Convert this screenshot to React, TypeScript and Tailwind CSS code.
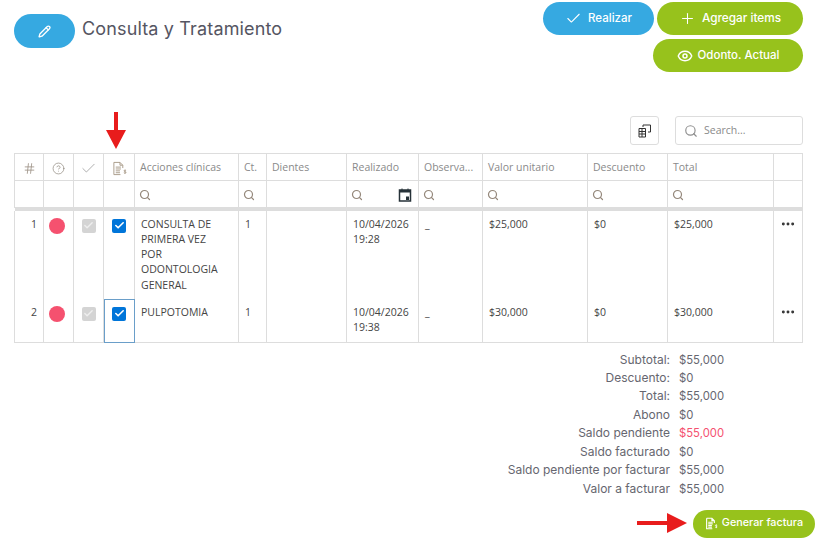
import { Check, Plus, Eye, Search, Pencil, Hash, CircleHelp, Ellipsis } from 'lucide-react'

const widths = [29, 30, 30, 31, 104, 28, 80, 72, 64, 105, 80, 106, 29]

const rows = [
  { n: 1, accion: 'CONSULTA DE PRIMERA VEZ POR ODONTOLOGIA GENERAL', fecha: '10/04/2026', hora: '19:28', valor: '$25,000', total: '$25,000', h: 'h-[88px]' },
  { n: 2, accion: 'PULPOTOMIA', fecha: '10/04/2026', hora: '19:38', valor: '$30,000', total: '$30,000', h: 'h-[44px]' },
]

const resumen = [
  ['Subtotal:', '$55,000'],
  ['Descuento:', '$0'],
  ['Total:', '$55,000'],
  ['Abono', '$0'],
  ['Saldo pendiente', '$55,000'],
  ['Saldo facturado', '$0'],
  ['Saldo pendiente por facturar', '$55,000'],
  ['Valor a facturar', '$55,000'],
]

function InvoiceIcon({ className, strokeWidth = 1 }: { className?: string; strokeWidth?: number }) {
  return (
    <svg viewBox="0 0 16 16" fill="none" stroke="currentColor" strokeWidth={strokeWidth} className={className}>
      <path d="M2 1.5h6.5l3 3v3M2 1.5v13h7M8.5 1.5v3h3M4 6.5h5.5M4 8.5h5.5M4 10.5h4.5M4 12.5h4.5" />
      <path d="M15 10.2c-.5-.6-2-.6-2.2.2-.2 1 2.2.8 2.1 1.9-.1.9-1.7.9-2.3.2M13.9 9.3v4.4" strokeWidth="0.9" />
    </svg>
  )
}

function GrayBox() {
  return (
    <span className="flex h-[14px] w-[14px] items-center justify-center rounded-[2px] bg-[#d4d4d4]">
      <Check size={11} strokeWidth={3} className="text-[#eeeeee]" />
    </span>
  )
}

function BlueBox() {
  return (
    <span className="flex h-[14px] w-[14px] items-center justify-center rounded-[2px] bg-[#0075d9]">
      <Check size={11} strokeWidth={3.5} className="text-white" />
    </span>
  )
}

function FilterIcon() {
  return <Search size={12} strokeWidth={2.4} className="ml-[-1px] text-[#94877a]" />
}

export default function App() {
  const th = 'border border-[#dddddd] px-[5px] pt-[2px] text-left align-middle font-normal text-[#8a8a8a]'
  const td = 'border-x border-[#dddddd] px-[6px] pt-[6px] align-top text-[#444444]'

  return (
    <div className="relative h-[542px] w-[819px] overflow-hidden bg-white font-['Inter',sans-serif]">
      <div className="flex items-start justify-between pl-[14px] pr-[16px] pt-[2px]">
        <div className="flex items-center gap-[7px] pt-[12px]">
          <button className="flex h-[34px] w-[61px] items-center justify-center rounded-full bg-[#36a9e1] text-white">
            <Pencil size={13} strokeWidth={2.4} />
          </button>
          <h1 className="mt-[-6px] text-[18px] font-normal tracking-[0.15px] text-[#555562]">Consulta y Tratamiento</h1>
        </div>
        <div className="flex w-[260px] flex-col items-end gap-[4px]">
          <div className="flex gap-[3px]">
            <button className="flex h-[33px] w-[111px] items-center justify-center gap-[6px] rounded-full bg-[#36a9e1] text-[11.5px] font-medium text-white">
              <Check size={17} strokeWidth={1.5} />
              Realizar
            </button>
            <button className="flex h-[33px] w-[146px] items-center justify-center gap-[6px] rounded-full bg-[#97c21c] text-[11.8px] font-medium text-white">
              <Plus size={17} strokeWidth={1.5} />
              Agregar items
            </button>
          </div>
          <button className="flex h-[33px] w-[150px] items-center justify-center gap-[5px] rounded-full bg-[#97c21c] text-[11.5px] font-medium text-white">
            <Eye size={16} strokeWidth={2.2} />
            Odonto. Actual
          </button>
        </div>
      </div>

      <div className="mt-[44px] flex items-center justify-end gap-[16px] pr-[16px]">
        <button className="flex h-[29px] w-[29px] items-center justify-center rounded-[3px] border border-[#dddddd] bg-white">
          <svg viewBox="0 0 14 14" fill="none" stroke="#333333" strokeWidth="1" className="h-[14px] w-[14px]">
            <path d="M5 3V1h7.5v7H10" />
            <path d="M1 4.5h6.5v8.5H1zM1 7.5h6.5M1 10h6.5M4 4.5V13" stroke="#333333" />
          </svg>
        </button>
        <div className="flex h-[29px] w-[128px] items-center gap-[6px] rounded-[3px] border border-[#dddddd] pl-[8px]">
          <Search size={14} strokeWidth={2} className="text-[#8f8f8f]" />
          <span className="font-['Open_Sans',sans-serif] text-[10.5px] text-[#8a8a8a]">Search...</span>
        </div>
      </div>

      <div className="pl-[14px] pt-[8px] font-['Open_Sans',sans-serif] text-[10.5px]">
        <table className="w-[789px] table-fixed border-collapse">
          <colgroup>
            {widths.map((w, i) => (
              <col key={i} style={{ width: w }} />
            ))}
          </colgroup>
          <thead>
            <tr className="h-[27px]">
              <th className={th}><Hash size={13} strokeWidth={1.5} className="mx-auto text-[#9a8f82]" /></th>
              <th className={th}><CircleHelp size={13} strokeWidth={1.25} className="mx-auto text-[#8a8378]" /></th>
              <th className={th}><Check size={17} strokeWidth={1} className="mx-auto text-[#8f8f8f]" /></th>
              <th className={th}><InvoiceIcon className="mx-auto h-[15px] w-[15px] text-[#a89a88]" /></th>
              <th className={th}>Acciones clínicas</th>
              <th className={th}>Ct.</th>
              <th className={th}>Dientes</th>
              <th className={th}>Realizado</th>
              <th className={th}>Observa...</th>
              <th className={th}>Valor unitario</th>
              <th className={th}>Descuento</th>
              <th className={th}>Total</th>
              <th className={th}></th>
            </tr>
            <tr className="h-[27px]">
              <th className={th}></th>
              <th className={th}></th>
              <th className={th}></th>
              <th className={th}></th>
              <th className={th}><FilterIcon /></th>
              <th className={th}><FilterIcon /></th>
              <th className={th}></th>
              <th className={th}>
                <div className="flex items-center justify-between pr-[1px]">
                  <FilterIcon />
                  <svg viewBox="0 0 14 14" className="h-[14px] w-[14px]">
                    <path d="M1.5 2h11v11h-11z" fill="none" stroke="#263238" strokeWidth="1.5" />
                    <path d="M1 2h12v2.5H1zM8 8.5h3V12H8z" fill="#263238" />
                    <path d="M4 0.5v2M10 0.5v2" stroke="#263238" />
                  </svg>
                </div>
              </th>
              <th className={th}><FilterIcon /></th>
              <th className={th}><FilterIcon /></th>
              <th className={th}><FilterIcon /></th>
              <th className={th}><FilterIcon /></th>
              <th className={th}></th>
            </tr>
          </thead>
          <tbody className="border-b border-[#dddddd]">
            <tr className="h-[3px]">
              <td colSpan={13} className="h-[3px] bg-[#dddddd] p-0"></td>
            </tr>
            {rows.map((r) => (
              <tr key={r.n} className={r.h}>
                <td className={`${td} text-right`}>{r.n}</td>
                <td className="border-x border-[#dddddd] pr-[4px] pt-[7px] align-top">
                  <span className="mx-auto block h-[16px] w-[16px] rounded-full bg-[#f5516f]"></span>
                </td>
                <td className="border-x border-[#dddddd] pt-[8px] align-top">
                  <div className="flex justify-center"><GrayBox /></div>
                </td>
                <td className={`border-x border-[#dddddd] pt-[8px] align-top ${r.n === 2 ? 'outline outline-1 -outline-offset-1 outline-[#6a9ec9]' : ''}`}>
                  <div className="flex justify-center"><BlueBox /></div>
                </td>
                <td className={`${td} pr-[16px] leading-[15.3px] text-[#333333]`}>{r.accion}</td>
                <td className={td}>1</td>
                <td className={td}></td>
                <td className={`${td} leading-[15.5px]`}>{r.fecha}<br />{r.hora}</td>
                <td className={td}>_</td>
                <td className={td}>{r.valor}</td>
                <td className={td}>$0</td>
                <td className={td}>{r.total}</td>
                <td className="border-x border-[#dddddd] pt-[5px] align-top">
                  <Ellipsis size={16} strokeWidth={2.4} className="mx-auto text-[#333333]" />
                </td>
              </tr>
            ))}
          </tbody>
        </table>
      </div>

      <div className="mt-[7px] flex flex-col gap-[0.45px] pt-[0.5px] text-[12px] text-[#66666f]">
        {resumen.map(([label, value]) => (
          <div key={label} className="flex h-[18px] gap-[9px] leading-[18px]">
            <span className="w-[670px] text-right">{label}</span>
            <span className={`text-[11.3px] ${label === 'Saldo pendiente' ? 'text-[#f5516f]' : ''}`}>{value}</span>
          </div>
        ))}
      </div>

      <div className="mt-[12px] flex justify-end pr-[4px]">
        <button className="flex h-[28px] w-[122px] items-center justify-center gap-[4px] rounded-full bg-[#97c21c] text-[10.8px] font-medium text-white">
          <InvoiceIcon className="h-[13px] w-[13px]" strokeWidth={1.4} />
          Generar factura
        </button>
      </div>

      <svg viewBox="0 0 20 37" fill="#e81c1c" className="absolute left-[106px] top-[112px] h-[37px] w-[20px]">
        <path d="M8 0h4v18h8L10 37 0 18h8z" />
      </svg>
      <svg viewBox="0 0 50 20" fill="#e81c1c" className="absolute left-[637px] top-[513px] h-[20px] w-[50px]">
        <path d="M0 8h30V0l20 10-20 10v-8H0z" />
      </svg>
    </div>
  )
}
